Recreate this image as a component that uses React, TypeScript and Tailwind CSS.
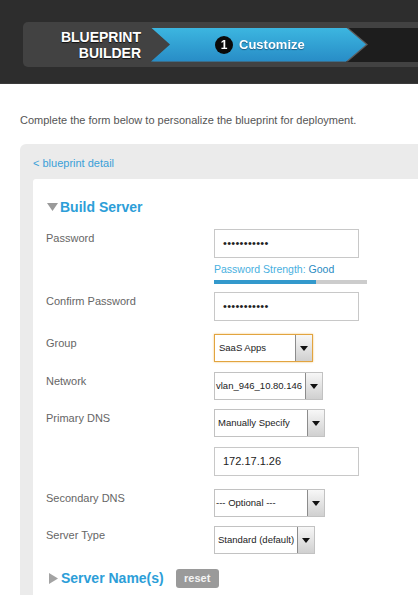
import React from 'react';

const font = { fontFamily: '"Liberation Sans", Arial, sans-serif' };

function Caret() {
  return (
    <svg width="8" height="5" viewBox="0 0 8 5" className="block">
      <path d="M0 0h8L4 5z" fill="#111" />
    </svg>
  );
}

function Select({ label, width, pad, focus }: { label: string; width: string; pad: string; focus?: boolean }) {
  return (
    <div
      className={`flex h-[28px] border bg-white ${width} ${
        focus ? 'border-[#e2a43f] shadow-[0_0_2px_#f3c77a]' : 'border-[#c2c2c2]'
      }`}
    >
      <div className={`flex-1 flex items-center text-[9.5px] text-[#222] whitespace-nowrap overflow-hidden ${pad}`}>{label}</div>
      <div className="w-[17px] border-l border-[#8c8c8c] bg-gradient-to-b from-[#f7f7f7] to-[#d0d0d0] flex items-center justify-center">
        <Caret />
      </div>
    </div>
  );
}

function Row({ label, children, className = '' }: { label: string; children: React.ReactNode; className?: string }) {
  return (
    <div className={`flex ${className}`}>
      <div className="w-[168px] shrink-0 pt-[2px] text-[11px] leading-[14px] text-[#666]">{label}</div>
      <div className="flex flex-col">{children}</div>
    </div>
  );
}

function TextBox({ children }: { children: React.ReactNode }) {
  return (
    <div className="w-[145px] h-[29px] border border-[#c8c8c8] bg-white flex items-center pl-[8px] text-[11px] text-[#222]">
      {children}
    </div>
  );
}

export default function App() {
  return (
    <div className="h-screen w-full overflow-hidden bg-white flex flex-col" style={font}>
      {/* header */}
      <div className="h-[84px] shrink-0 bg-[#2d2d2d] pt-[22px] pl-[23px] border-b border-[#3a3a3a]">
        <div className="h-[45px] bg-[#424242] rounded-l-[5px] flex items-center">
          <div className="w-[118px] text-right text-white font-bold text-[14px] leading-[16px] [text-shadow:0_1px_1px_#111]">
            BLUEPRINT
            <br />
            BUILDER
          </div>
          <div className="ml-[10px] flex flex-1 h-[34px]">
            <div className="relative z-10 [filter:drop-shadow(2px_0_0_#5c5c5c)]">
              <div className="w-[215px] h-[34px] bg-gradient-to-b from-[#3cb6e0] to-[#288cc6] [clip-path:polygon(0_0,195px_0,215px_50%,195px_100%,0_100%,19px_50%)] flex items-center pl-[64px]">
                <div className="w-[18px] h-[18px] rounded-full bg-[#0a0a0a] flex items-center justify-center text-white font-bold text-[12px]">
                  1
                </div>
                <span className="ml-[6px] text-white font-bold text-[13px] [text-shadow:0_1px_1px_#1a5f88]">Customize</span>
              </div>
            </div>
            <div className="flex-1 -ml-[20px] bg-[#1d1d1d]" />
          </div>
        </div>
      </div>

      <div className="pl-[20px] pt-[29px] text-[11px] leading-[14px] text-[#555]">
        Complete the form below to personalize the blueprint for deployment.
      </div>

      {/* panel */}
      <div className="mt-[17px] ml-[20px] flex-1 flex flex-col bg-[#ebebeb] rounded-tl-[6px] pt-[12px] pl-[13px]">
        <div className="text-[11px] leading-[14px] text-[#3aa0d8]">&lt; blueprint detail</div>
        <div className="mt-[9px] flex-1 bg-white rounded-tl-[3px] pl-[13px] pt-[19px]">
          <div className="flex items-center h-[18px]">
            <svg width="11" height="8" viewBox="0 0 11 8" className="ml-[1px]">
              <path d="M0 0h11L5.5 8z" fill="#9a9a9a" />
            </svg>
            <span className="ml-[2px] text-[14px] font-bold text-[#2c9ed8]">Build Server</span>
          </div>

          <Row label="Password" className="mt-[13px]">
            <TextBox>
              <span className="tracking-[0.3px]">•••••••••••</span>
            </TextBox>
            <div className="mt-[4px] text-[10.5px] leading-[14px] text-[#49b0e0]">
              Password Strength: <span className="text-[#2a8ac2]">Good</span>
            </div>
            <div className="mt-[4px] w-[153px] h-[4px] bg-[#cccccc] flex">
              <div className="w-[102px] bg-[#3399cc]" />
            </div>
          </Row>

          <Row label="Confirm Password" className="mt-[8px]">
            <TextBox>
              <span className="tracking-[0.3px]">•••••••••••</span>
            </TextBox>
          </Row>

          <Row label="Group" className="mt-[13px]">
            <Select label="SaaS Apps" width="w-[99px]" pad="pl-[4px]" focus />
          </Row>

          <Row label="Network" className="mt-[10px]">
            <Select label="vlan_946_10.80.146" width="w-[109px]" pad="pl-[1px]" />
          </Row>

          <Row label="Primary DNS" className="mt-[9px]">
            <Select label="Manually Specify" width="w-[111px]" pad="pl-[3px]" />
            <div className="mt-[10px]">
              <TextBox>172.17.1.26</TextBox>
            </div>
          </Row>

          <Row label="Secondary DNS" className="mt-[13px]">
            <Select label="--- Optional ---" width="w-[111px]" pad="pl-[1px]" />
          </Row>

          <Row label="Server Type" className="mt-[9px]">
            <Select label="Standard (default)" width="w-[101px]" pad="pl-[3px]" />
          </Row>

          <div className="mt-[15px] flex items-center h-[19px]">
            <svg width="9" height="11" viewBox="0 0 9 11" className="ml-[3px]">
              <path d="M0 0l9 5.5L0 11z" fill="#a3a3a3" />
            </svg>
            <span className="ml-[3px] text-[14px] font-bold text-[#2c9ed8]">Server Name(s)</span>
            <div className="ml-[12px] w-[43px] h-[19px] rounded-[3px] bg-[#9a9a9a] flex items-center justify-center text-[11px] font-bold text-[#f4f4f4]">
              reset
            </div>
          </div>
        </div>
      </div>
    </div>
  );
}
